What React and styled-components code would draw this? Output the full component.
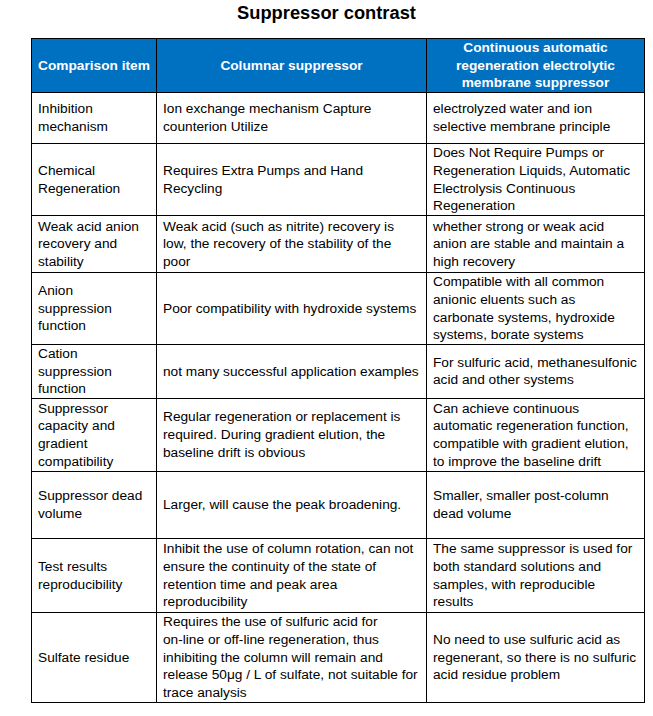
import React from 'react'
import styled, { createGlobalStyle } from 'styled-components'

const GlobalStyle = createGlobalStyle`
  body {
    margin: 0;
    background: #fff;
    font-family: 'Liberation Sans', Arial, sans-serif;
    color: #000;
  }
`

const NoWrap = styled.span`
  white-space: nowrap;
`

const rows = [
  {
    h: 51,
    item: 'Inhibition mechanism',
    col: 'Ion exchange mechanism Capture counterion Utilize',
    mem: 'electrolyzed water and ion selective membrane principle',
  },
  {
    h: 72,
    item: 'Chemical Regeneration',
    col: 'Requires Extra Pumps and Hand Recycling',
    mem: 'Does Not Require Pumps or Regeneration Liquids, Automatic Electrolysis Continuous Regeneration',
  },
  {
    h: 57,
    item: 'Weak acid anion recovery and stability',
    col: 'Weak acid (such as nitrite) recovery is low, the recovery of the stability of the poor',
    mem: 'whether strong or weak acid anion are stable and maintain a high recovery',
  },
  {
    h: 71,
    item: 'Anion suppression function',
    col: 'Poor compatibility with hydroxide systems',
    mem: 'Compatible with all common anionic eluents such as carbonate systems, hydroxide systems, borate systems',
  },
  {
    h: 54,
    item: 'Cation suppression function',
    col: 'not many successful application examples',
    mem: 'For sulfuric acid, methanesulfonic acid and other systems',
  },
  {
    h: 73,
    item: 'Suppressor capacity and gradient compatibility',
    col: 'Regular regeneration or replacement is required. During gradient elution, the baseline drift is obvious',
    mem: 'Can achieve continuous automatic regeneration function, compatible with gradient elution, to improve the baseline drift',
  },
  {
    h: 67,
    item: 'Suppressor dead volume',
    col: 'Larger, will cause the peak broadening.',
    mem: 'Smaller, smaller post-column dead volume',
  },
  {
    h: 74,
    item: 'Test results reproducibility',
    col: 'Inhibit the use of column rotation, can not ensure the continuity of the state of retention time and peak area reproducibility',
    mem: 'The same suppressor is used for both standard solutions and samples, with reproducible results',
  },
  {
    h: 90,
    item: 'Sulfate residue',
    col: (
      <>
        Requires the use of sulfuric acid for <NoWrap>on-line</NoWrap> or{' '}
        <NoWrap>off-line</NoWrap> regeneration, thus inhibiting the column
        will remain and release 50μg / L of sulfate, not suitable for trace
        analysis
      </>
    ),
    mem: 'No need to use sulfuric acid as regenerant, so there is no sulfuric acid residue problem',
  },
]

const App = () => {
  return (
    <Page>
      <GlobalStyle />
      <Title>Suppressor contrast</Title>
      <Table>
        <colgroup>
          <col style={{ width: 125 }} />
          <col style={{ width: 270 }} />
          <col style={{ width: 218 }} />
        </colgroup>
        <thead>
          <Row $h={54}>
            <HeadCell>Comparison item</HeadCell>
            <HeadCell>Columnar suppressor</HeadCell>
            <HeadCell>
              Continuous automatic regeneration electrolytic membrane suppressor
            </HeadCell>
          </Row>
        </thead>
        <tbody>
          {rows.map((r) => (
            <Row key={r.item} $h={r.h}>
              <Cell $pr={8}>{r.item}</Cell>
              <Cell $pr={6}>{r.col}</Cell>
              <Cell $pr={5}>{r.mem}</Cell>
            </Row>
          ))}
        </tbody>
      </Table>
    </Page>
  )
}
export default App

const Page = styled.div`
  width: 653px;
  min-height: 716px;
  display: flex;
  flex-direction: column;
`

const Title = styled.h1`
  margin: 0 0 12px;
  font-size: 18.3px;
  line-height: 26px;
  font-weight: 700;
  text-align: center;
`

const Table = styled.table`
  margin-left: 31px;
  width: 613px;
  table-layout: fixed;
  border-collapse: collapse;
  font-size: 13.7px;
  line-height: 17.7px;
`

const Row = styled.tr`
  height: ${(p) => p.$h}px;
`

const HeadCell = styled.th`
  border: 1px solid #000;
  background: #0070c0;
  color: #fff;
  font-weight: 700;
  text-align: center;
  vertical-align: middle;
  padding: 0 4px;
`

const Cell = styled.td`
  border: 1px solid #000;
  vertical-align: middle;
  padding: 0 ${(p) => p.$pr}px 0 6px;
`
